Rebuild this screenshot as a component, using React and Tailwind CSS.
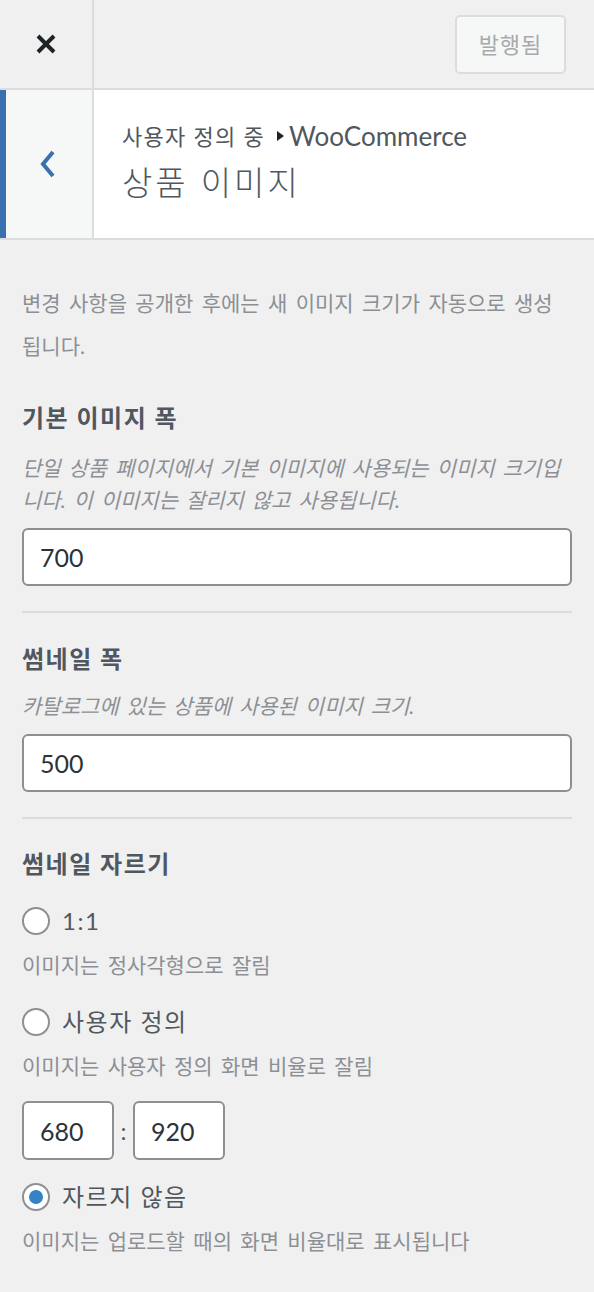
import { useState } from "react";

const font = { fontFamily: "Lato, 'Noto Sans CJK KR', sans-serif" };

function Radio({ checked, label, onClick }) {
  return (
    <button type="button" onClick={onClick} className="flex items-center gap-[12px] text-left">
      <span className="w-[28px] h-[28px] rounded-full border-2 border-[#8c8f94] bg-white flex items-center justify-center">
        {checked && <span className="w-[14px] h-[14px] rounded-full bg-[#3582c4]" />}
      </span>
      <span className="text-[24px] leading-[32px] tracking-[1.5px] [word-spacing:0px] text-[#50575e]">{label}</span>
    </button>
  );
}

const numInput = "rounded-[6px] border-2 border-[#8c8f94] bg-white px-[16px] text-[25px] text-[#2c3338] outline-none";

export default function App() {
  const [crop, setCrop] = useState("none");
  const [main, setMain] = useState("700");
  const [thumb, setThumb] = useState("500");
  const [w, setW] = useState("680");
  const [h, setH] = useState("920");

  return (
    <div style={font} className="w-[594px] min-h-[1292px] bg-[#f0f0f0]">
      {/* top bar */}
      <div className="h-[90px] flex border-b-2 border-[#dcdcde]">
        <div className="w-[94px] border-r-2 border-[#dcdcde] flex items-center justify-center">
          <svg width="22" height="22" viewBox="0 0 22 22">
            <path d="M3 3 L19 19 M19 3 L3 19" stroke="#1d2327" strokeWidth="4" />
          </svg>
        </div>
        <div className="flex-1 flex items-center justify-end pr-[28px]">
          <button className="w-[111px] h-[59px] rounded-[5px] border-2 border-[#dcdcde] bg-[#f6f7f7] text-[#a7aaad] text-[22px] tracking-[1px]">
            발행됨
          </button>
        </div>
      </div>

      {/* section header */}
      <div className="h-[150px] flex bg-white border-b-2 border-[#dcdcde]">
        <div className="w-[94px] flex border-r-2 border-[#dcdcde] bg-[#f6f7f7]">
          <div className="w-[6px] bg-[#3a6fb0]" />
          <div className="flex-1 flex items-center justify-center pr-[2px]">
            <svg width="18" height="30" viewBox="0 0 18 30">
              <path d="M14 3 L4 15 L14 27" fill="none" stroke="#3a6fb0" strokeWidth="4" />
            </svg>
          </div>
        </div>
        <div className="flex-1 pl-[28px] pt-[30px]">
          <div className="h-[32px] text-[22px] tracking-[1.3px] text-[#50575e] flex items-center">
            사용자 정의 중
            <span className="ml-[12px] mr-[5px] inline-block w-0 h-0 border-y-[5px] border-y-transparent border-l-[7px] border-l-[#1d2327]" />
            <span className="text-[26px] tracking-normal">WooCommerce</span>
          </div>
          <h1 className="text-[33px] leading-[44px] font-light tracking-[3px] text-[#50575e] mt-[8px]">상품 이미지</h1>
        </div>
      </div>

      {/* body */}
      <div className="px-[22px] tracking-[0px] [word-spacing:3px]">
        <p className="mt-[41px] text-[21px] leading-[43px] text-[#8c8f94]">
          변경 사항을 공개한 후에는 새 이미지 크기가 자동으로 생성 됩니다.
        </p>

        <h2 className="mt-[35px] text-[24px] leading-[32px] tracking-[1.5px] [word-spacing:0px] font-bold text-[#50575e]">기본 이미지 폭</h2>
        <p className="mt-[18px] text-[21px] leading-[32px] italic text-[#8c8f94]">
          단일 상품 페이지에서 기본 이미지에 사용되는 이미지 크기입니다. 이 이미지는 잘리지 않고 사용됩니다.
        </p>
        <input
          value={main}
          onChange={(e) => setMain(e.target.value)}
          className={`mt-[12px] w-full h-[58px] ${numInput}`}
        />

        <div className="mt-[25px] border-t-2 border-[#dcdcde]" />

        <h2 className="mt-[30px] text-[24px] leading-[32px] tracking-[1.5px] [word-spacing:0px] font-bold text-[#50575e]">썸네일 폭</h2>
        <p className="mt-[15px] text-[21px] leading-[32px] italic text-[#8c8f94]">
          카탈로그에 있는 상품에 사용된 이미지 크기.
        </p>
        <input
          value={thumb}
          onChange={(e) => setThumb(e.target.value)}
          className={`mt-[12px] w-full h-[58px] ${numInput}`}
        />

        <div className="mt-[25px] border-t-2 border-[#dcdcde]" />

        <h2 className="mt-[29px] text-[24px] leading-[32px] tracking-[1.5px] [word-spacing:0px] font-bold text-[#50575e]">썸네일 자르기</h2>

        <div className="mt-[25px]">
          <Radio checked={crop === "1:1"} label="1:1" onClick={() => setCrop("1:1")} />
          <p className="mt-[12px] text-[21px] leading-[32px] text-[#8c8f94]">이미지는 정사각형으로 잘림</p>
        </div>
        <div className="mt-[25px]">
          <Radio checked={crop === "custom"} label="사용자 정의" onClick={() => setCrop("custom")} />
          <p className="mt-[12px] text-[21px] leading-[32px] text-[#8c8f94]">이미지는 사용자 정의 화면 비율로 잘림</p>
          <div className="mt-[19px] flex items-center tracking-normal">
            <input value={w} onChange={(e) => setW(e.target.value)} className={`w-[92px] h-[59px] ${numInput}`} />
            <span className="w-[19px] text-center text-[24px] text-[#50575e]">:</span>
            <input value={h} onChange={(e) => setH(e.target.value)} className={`w-[92px] h-[59px] ${numInput}`} />
          </div>
        </div>
        <div className="mt-[21px]">
          <Radio checked={crop === "none"} label="자르지 않음" onClick={() => setCrop("none")} />
          <p className="mt-[12px] text-[21px] leading-[32px] text-[#8c8f94]">이미지는 업로드할 때의 화면 비율대로 표시됩니다</p>
        </div>
      </div>
    </div>
  );
}
